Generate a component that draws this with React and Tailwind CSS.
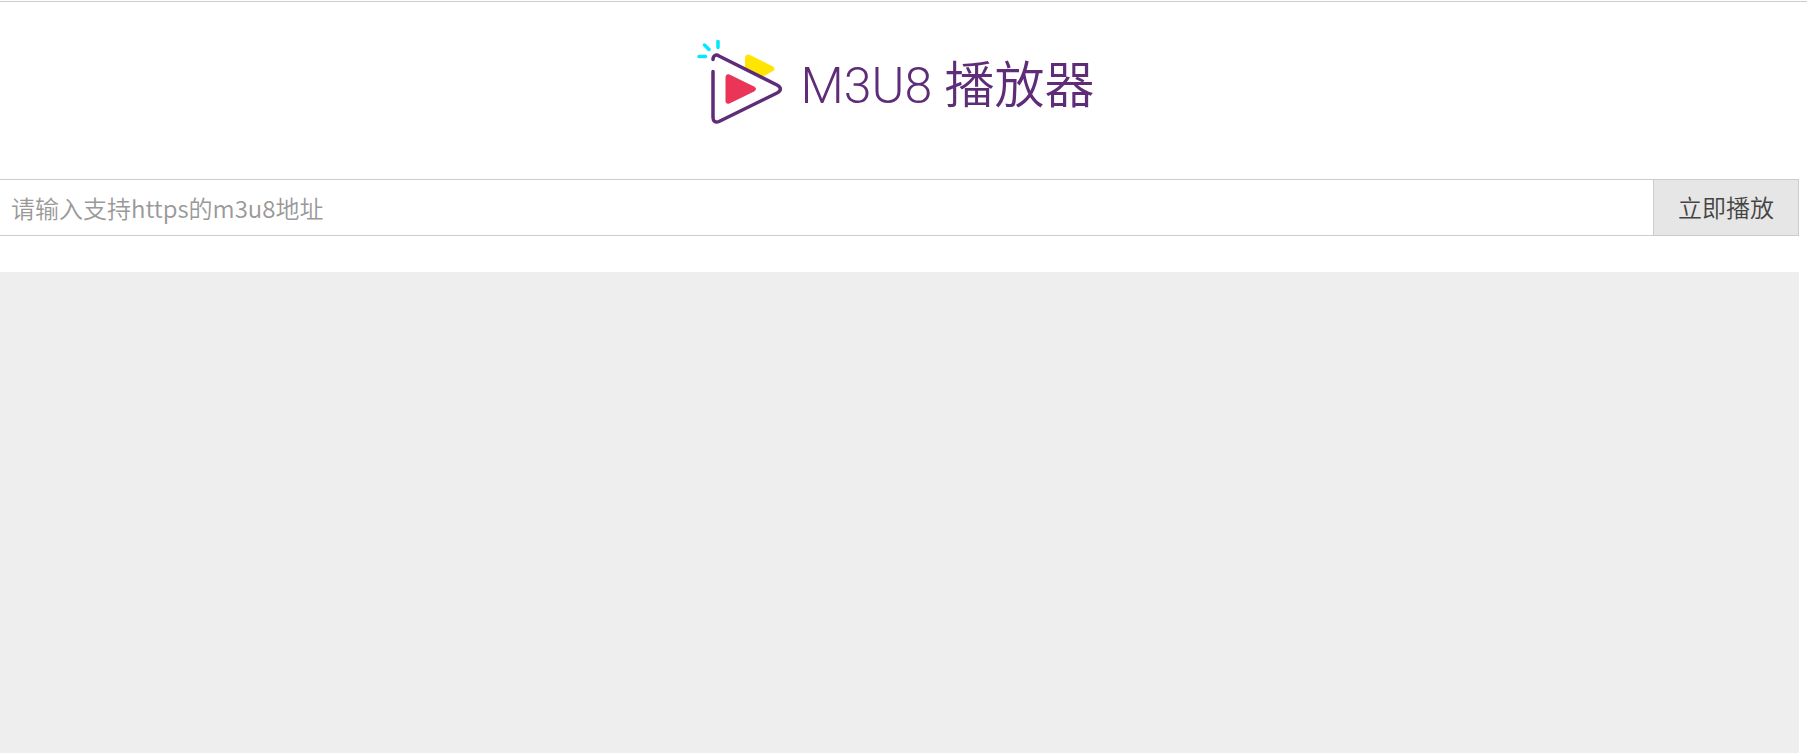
import { useState } from "react";

function Logo() {
  return (
    <svg className="h-[86px] w-[88px] shrink-0" viewBox="0 0 88 86" fill="none" aria-hidden="true">
      <path d="M48 18V17.500Q49 13 54 15.500L76 26.500Q79 29 76 31L66 36.500Q64 37.500 61 36L48 29.500V18Z" fill="#ffe500" />
      <path d="M28.500 38Q28.500 33.500 32.500 34.500L57 46.500Q61 49 57 51.500L32.500 63.500Q28.500 64.500 28.500 60.500Z" fill="#ea3458" />
      <path
        d="M16 19.500C16 15.500 19 14 22 16L80 45C84.500 47.500 84.500 50.500 80 53L22 81.500C18.500 83 16 81.500 16 77.500V31.500"
        stroke="#5f2c78"
        strokeWidth="3.500"
        strokeLinecap="round"
        strokeLinejoin="round"
      />
      <path d="M2 16.500H8.500M7.500 5L12 9.500M21 1.500V7.500" stroke="#00e8ff" strokeWidth="3.500" strokeLinecap="round" />
    </svg>
  );
}

export default function App() {
  const [url, setUrl] = useState("");
  return (
    <div className="flex min-h-screen flex-col bg-white pt-px font-['Noto_Sans_CJK_SC',sans-serif]">
      <header className="flex items-start justify-center border-t border-[#ccc] pt-[38px] pr-4 pb-[53px]">
        <Logo />
        <h1 className="mt-1.5 ml-4 font-['Roboto','Noto_Sans_CJK_SC',sans-serif] text-[50px] leading-[80px] font-[350] whitespace-nowrap text-[#5f2c78]">
          M3U8 播放器
        </h1>
      </header>
      <form className="mr-2 flex h-[57px] border border-l-0 border-[#ccc] text-2xl" onSubmit={(e) => e.preventDefault()}>
        <input
          type="text"
          aria-label="m3u8地址"
          value={url}
          onChange={(e) => setUrl(e.target.value)}
          placeholder="请输入支持https的m3u8地址"
          className="min-w-0 flex-1 px-[11px] font-[350] text-[#444] outline-none placeholder:text-[#999]"
        />
        <button type="submit" className="border-l border-[#ccc] bg-[#e6e6e6] px-6 pb-0.5 font-[350] text-[#444]">
          立即播放
        </button>
      </form>
      <main className="mt-9 mr-2 flex-1 bg-[#eee]" aria-label="播放区域" />
    </div>
  );
}
